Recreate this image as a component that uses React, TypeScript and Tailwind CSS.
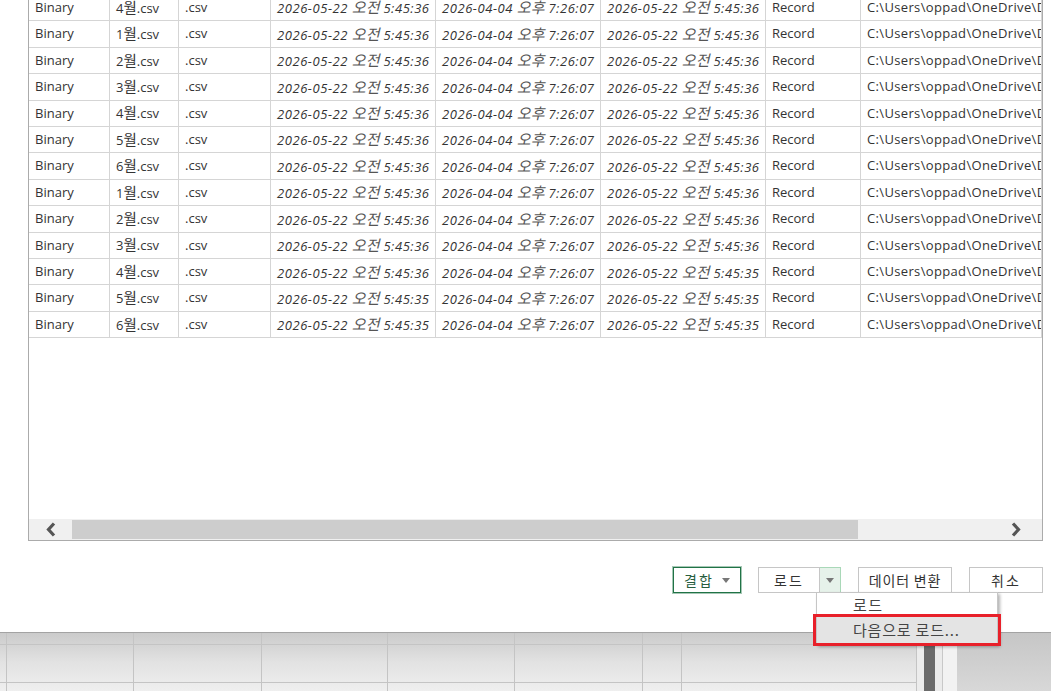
import React from "react";

const months = ["4", "1", "2", "3", "4", "5", "6", "1", "2", "3", "4", "5", "6"];

const rows = months.map((m, i) => ({
  month: m,
  accessed: i >= 11 ? "5:45:35" : "5:45:36",
  created: i >= 10 ? "5:45:35" : "5:45:36",
}));

function Cell({ children, italic }: { children: React.ReactNode; italic?: boolean }) {
  return (
    <div
      className={
        "flex items-center overflow-hidden whitespace-nowrap border-r border-b border-[#d5d5d5] pl-[6px] " +
        (italic ? "italic tracking-[0.55px]" : "")
      }
    >
      {children}
    </div>
  );
}

function Stamp({ date, ampm, time }: { date: string; ampm: string; time: string }) {
  return (
    <span>
      {date} <span className="text-[15px] tracking-[0px] text-[#555]">{ampm}</span> {time}
    </span>
  );
}

const btnFont = { fontFamily: '"Noto Sans CJK KR", sans-serif' };

export default function App() {
  return (
    <div
      className="relative flex h-[691px] w-[1051px] flex-col overflow-hidden bg-white text-[#333]"
      style={{ fontFamily: '"Open Sans", "Noto Sans CJK KR", sans-serif' }}
    >
      {/* dialog */}
      <div className="flex h-[632px] flex-col">
        <div className="ml-[28px] flex h-[541px] w-[1015px] flex-col overflow-hidden border-x border-b border-[#ababab]">
          <div className="flex-1 overflow-hidden">
            <div className="-mt-[5px] grid grid-cols-[81px_69px_92px_165px_165px_165px_95px_1fr] auto-rows-[26.42px] text-[13px]">
              {rows.map((r, i) => (
                <React.Fragment key={i}>
                  <Cell>Binary</Cell>
                  <Cell>
                    <span>
                      {r.month}
                      <span className="text-[14.5px]">월</span>.csv
                    </span>
                  </Cell>
                  <Cell>.csv</Cell>
                  <Cell italic>
                    <Stamp date="2026-05-22" ampm="오전" time={r.accessed} />
                  </Cell>
                  <Cell italic>
                    <Stamp date="2026-04-04" ampm="오후" time="7:26:07" />
                  </Cell>
                  <Cell italic>
                    <Stamp date="2026-05-22" ampm="오전" time={r.created} />
                  </Cell>
                  <Cell>Record</Cell>
                  <Cell>
                    <span className="tracking-[0.35px]">C:\Users\oppad\OneDrive\Desktop\</span>
                  </Cell>
                </React.Fragment>
              ))}
            </div>
          </div>

          {/* horizontal scrollbar */}
          <div className="flex h-[21px] items-stretch bg-[#f0f0f0]">
            <div className="flex w-[43px] items-center justify-center">
              <svg width="11" height="15" viewBox="0 0 11 15">
                <path d="M9 1.5 L3.5 7.5 L9 13.5" fill="none" stroke="#555" strokeWidth="3.2" />
              </svg>
            </div>
            <div className="my-[1px] w-[786px] bg-[#cdcdcd]" />
            <div className="flex flex-1 items-center justify-end pr-[20px]">
              <svg width="11" height="15" viewBox="0 0 11 15">
                <path d="M2 1.5 L7.5 7.5 L2 13.5" fill="none" stroke="#555" strokeWidth="3.2" />
              </svg>
            </div>
          </div>
        </div>

        {/* buttons */}
        <div className="mt-[26px] flex justify-end gap-[17px] pr-[8px] text-[14px] tracking-[2px]" style={btnFont}>
          <button className="flex h-[26px] w-[68px] items-center justify-center gap-[8px] border border-[#217346] text-[#285e3f] outline outline-1 outline-[#217346]/40">
            <span>결합</span>
            <svg width="8" height="5" viewBox="0 0 8 5">
              <path d="M0 0 H8 L4 5 Z" fill="#777" />
            </svg>
          </button>
          <div className="flex h-[26px]">
            <button className="flex w-[62px] items-center justify-center border border-[#c6c6c6] text-[#333]">
              로드
            </button>
            <button className="flex w-[21px] items-center justify-center border border-l-0 border-[#a9d8b8] bg-[#e6f2ea]">
              <svg width="8" height="5" viewBox="0 0 8 5">
                <path d="M0 0 H8 L4 5 Z" fill="#777" />
              </svg>
            </button>
          </div>
          <button className="flex h-[26px] w-[94px] items-center justify-center border border-[#c6c6c6] tracking-[0.8px] text-[#333]">
            데이터 변환
          </button>
          <button className="flex h-[26px] w-[74px] items-center justify-center border border-[#c6c6c6] text-[#333]">
            취소
          </button>
        </div>
      </div>

      {/* excel sheet behind the dialog */}
      <div className="relative flex h-[59px] border-t border-[#a3a3a3] bg-gradient-to-b from-[#cbcbcb] via-[#e2e2e2] to-[#efefef]">
        <div className="grid flex-1 grid-cols-[7px_127px_128px_126px_127px_128px_39px_235px] grid-rows-[12px_38px_9px]">
          {Array.from({ length: 24 }).map((_, i) => (
            <div key={i} className="border-r border-b border-[#c4c4c4]" />
          ))}
        </div>
        <div className="flex w-[7px] bg-[#ececec]" />
        <div className="mt-[13px] w-[11px] bg-[#6b6b6b]" />
        <div className="w-[8px] border-r border-[#c8c8c8] bg-[#ebebeb]" />
        <div className="w-[14px] bg-[#f2f2f2]" />
        <div className="flex-1 bg-gradient-to-b from-[#c6c6c6] to-[#d8d8d8]" />
      </div>

      {/* dropdown menu over the sheet */}
      <div
        className="absolute left-[816px] top-[592px] w-[182px] border border-[#c6c6c6] bg-white text-[15px] text-[#444] shadow-[2px_2px_3px_rgba(0,0,0,0.3)]"
        style={btnFont}
      >
        <div className="flex h-[24px] items-center pl-[36px] tracking-[1.5px]">로드</div>
        <div className="flex h-[27px] items-center bg-[#e4e4e4] pl-[36px] tracking-[0.8px]">다음으로 로드...</div>
      </div>
      <div className="pointer-events-none absolute left-[813px] top-[614px] h-[32px] w-[188px] border-[3px] border-[#e8202a]" />
    </div>
  );
}
